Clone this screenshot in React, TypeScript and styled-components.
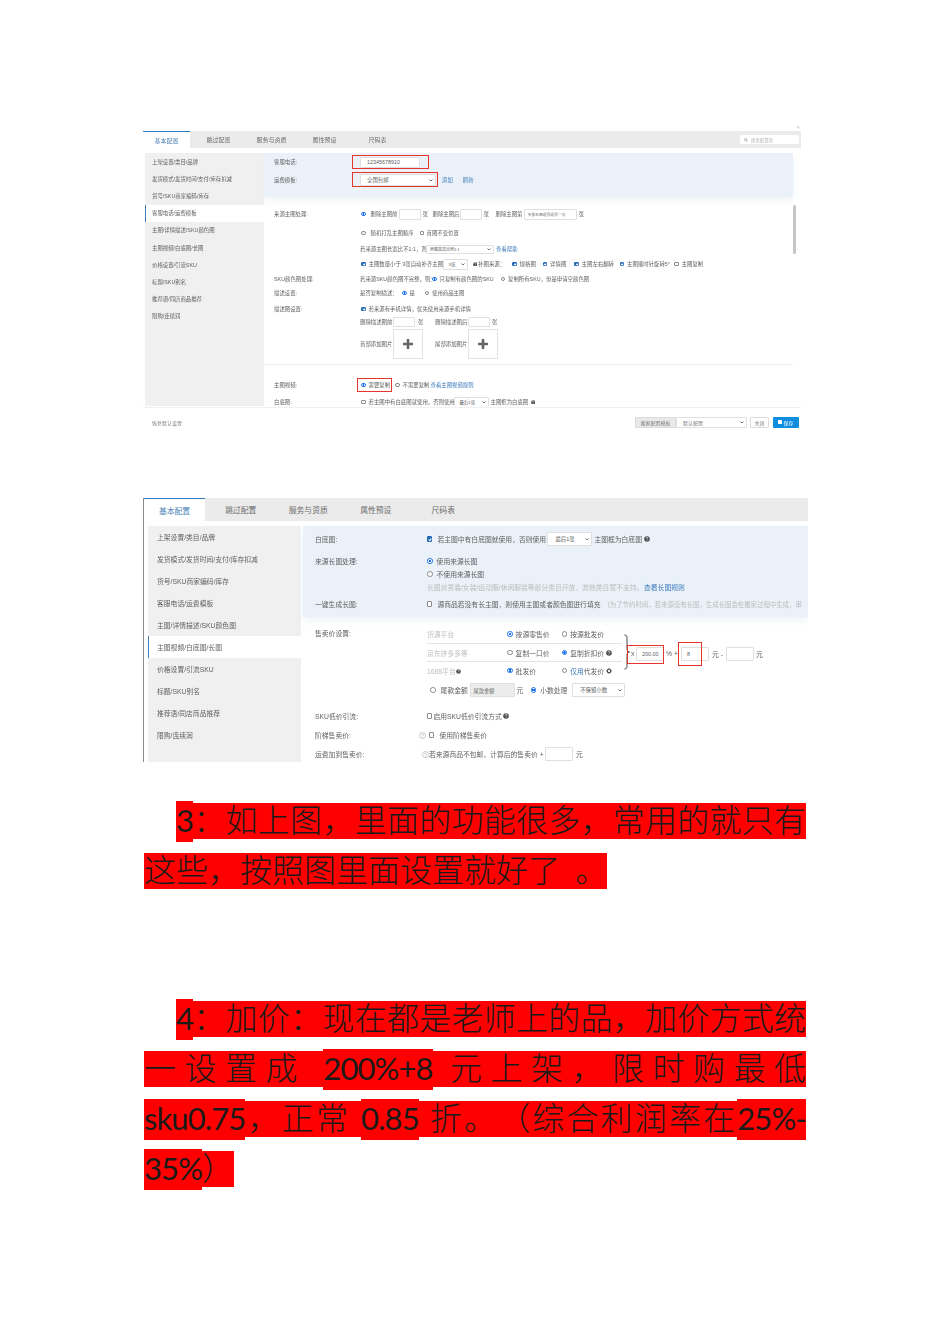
import React from "react";
import styled, { createGlobalStyle } from "styled-components";

const Global = createGlobalStyle`
  html, body { margin: 0; padding: 0; background: #fff; }
  * { box-sizing: border-box; }
`;

const FONT = `"Liberation Sans", "Noto Sans CJK SC", sans-serif`;

const Page = styled.div`
  width: 950px;
  height: 1344px;
  overflow: hidden;
  padding-top: 124px;
  font-family: ${FONT};
`;

const Panel = styled.section<{ $w: number; $h: number; $mt?: number; $fs: number; $rule?: boolean }>`
  position: relative;
  width: ${(p) => p.$w}px;
  height: ${(p) => p.$h}px;
  margin: ${(p) => p.$mt ?? 0}px 0 0 143px;
  font-size: ${(p) => p.$fs}px;
  color: #5f5f5f;
  overflow: hidden;
  filter: blur(0.35px);
  border-left: ${(p) => (p.$rule ? "1px solid #8a8a8a" : "0")};
`;

const CloseRow = styled.div`
  height: 7px;
  line-height: 7px;
  text-align: right;
  font-size: 6px;
  color: #c8c8c8;
  padding-right: 1px;
`;

const TabBar = styled.div<{ $h: number }>`
  display: flex;
  align-items: center;
  justify-content: flex-start;
  height: ${(p) => p.$h}px;
  background: #ebebeb;
`;

const Tab = styled.div<{ $w: number; $active?: boolean; $fs: number }>`
  flex: none;
  align-self: stretch;
  width: ${(p) => p.$w}px;
  display: flex;
  align-items: center;
  justify-content: center;
  font-size: ${(p) => p.$fs}px;
  color: ${(p) => (p.$active ? "#4a7fb5" : "#6c6c6c")};
  background: ${(p) => (p.$active ? "#fff" : "transparent")};
  border-top: ${(p) => (p.$active ? "1.5px solid #2f7dc0" : "0")};
  margin-right: ${(p) => (p.$active ? 2 : 0)}px;
`;

const SearchBox = styled.div`
  margin-left: auto;
  margin-right: 2px;
  width: 59px;
  height: 9px;
  display: flex;
  align-items: center;
  gap: 3px;
  padding-left: 4px;
  border-radius: 2px;
  background: #fff;
  color: #b5b5b5;
  font-size: 4.4px;
`;

const Body = styled.div<{ $h: number; $mt: number; $ml: number }>`
  display: flex;
  height: ${(p) => p.$h}px;
  margin-top: ${(p) => p.$mt}px;
  margin-left: ${(p) => p.$ml}px;
  overflow: hidden;
`;

const Side = styled.nav<{ $w: number }>`
  flex: none;
  width: ${(p) => p.$w}px;
  background: #f0f0f0;
`;

const SideItem = styled.div<{ $h: number; $pl: number; $active?: boolean }>`
  height: ${(p) => p.$h}px;
  display: flex;
  align-items: center;
  padding-left: ${(p) => p.$pl}px;
  white-space: nowrap;
  background: ${(p) => (p.$active ? "#fff" : "transparent")};
  border-left: ${(p) => (p.$active ? "1px solid #3c7fb8" : "0")};
`;

const Main = styled.div<{ $ml?: number }>`
  flex: 1;
  min-width: 0;
  margin-left: ${(p) => p.$ml ?? 0}px;
`;

const Blue = styled.div<{ $w?: number; $pb: number }>`
  width: ${(p) => (p.$w ? `${p.$w}px` : "auto")};
  background: #eaf1f8;
  padding-bottom: ${(p) => p.$pb}px;
  box-shadow: 0 4px 6px rgba(234, 241, 248, 0.7);
`;

const Spacer = styled.div<{ $h: number }>`
  height: ${(p) => p.$h}px;
`;

const Separator = styled.div<{ $w: number }>`
  width: ${(p) => p.$w}px;
  height: 1px;
  background: #eeeeee;
`;

const Field = styled.div<{ $h: number; $pl?: number }>`
  display: flex;
  align-items: center;
  height: ${(p) => p.$h}px;
  padding-left: ${(p) => p.$pl ?? 10}px;
  white-space: nowrap;
`;

const Label = styled.div<{ $w: number }>`
  flex: none;
  width: ${(p) => p.$w}px;
`;

const TopLabel = styled(Label)`
  align-self: flex-start;
  height: 18px;
  line-height: 18px;
`;

const Txt = styled.span<{ $ml?: number; $w?: number; $c?: string }>`
  flex: none;
  display: inline-block;
  margin-left: ${(p) => p.$ml ?? 0}px;
  width: ${(p) => (p.$w ? `${p.$w}px` : "auto")};
  color: ${(p) => p.$c ?? "inherit"};
  white-space: nowrap;
`;

const Note = styled.span`
  flex: none;
  color: #bdbdbd;
  font-size: 6.5px;
  letter-spacing: -0.1px;
  white-space: nowrap;
`;

const Tinted = styled.span`
  color: #3f7cbd;
`;

const Radio = styled.span<{ $on?: boolean; $ml?: number; $s: number }>`
  flex: none;
  width: ${(p) => p.$s}px;
  height: ${(p) => p.$s}px;
  margin-left: ${(p) => p.$ml ?? 0}px;
  border-radius: 50%;
  border: 0.6px solid ${(p) => (p.$on ? "#1a73e8" : "#8a8a8a")};
  background: ${(p) => (p.$on ? "radial-gradient(circle, #1a73e8 48%, #fff 56%)" : "#fff")};
`;

const Check = styled.span<{ $on?: boolean; $ml?: number; $s: number }>`
  flex: none;
  position: relative;
  width: ${(p) => p.$s}px;
  height: ${(p) => p.$s}px;
  margin-left: ${(p) => p.$ml ?? 0}px;
  border-radius: 1px;
  border: 0.6px solid ${(p) => (p.$on ? "#2268b4" : "#8a8a8a")};
  background: ${(p) => (p.$on ? "#2268b4" : "#fff")};
  &::after {
    content: "";
    display: ${(p) => (p.$on ? "block" : "none")};
    position: absolute;
    left: 28%;
    top: 8%;
    width: 34%;
    height: 58%;
    border: solid #fff;
    border-width: 0 0.7px 0.7px 0;
    transform: rotate(40deg);
  }
`;

const Input = styled.span<{ $w: number; $h: number; $ml?: number; $bg?: string; $pl?: number; $fs?: number }>`
  flex: none;
  position: relative;
  display: flex;
  align-items: center;
  width: ${(p) => p.$w}px;
  height: ${(p) => p.$h}px;
  margin-left: ${(p) => p.$ml ?? 0}px;
  padding-left: ${(p) => p.$pl ?? 3}px;
  border: 0.6px solid #dfdfdf;
  border-radius: 1px;
  background: ${(p) => p.$bg ?? "#fff"};
  font-size: ${(p) => (p.$fs ? `${p.$fs}px` : "inherit")};
`;

const Chevron = styled.svg`
  position: absolute;
  right: 2px;
  top: 50%;
  width: 4px;
  height: 3px;
  margin-top: -1.5px;
`;

const RedFrame = styled.div<{ $t: number; $r: number; $b: number; $l: number }>`
  position: absolute;
  top: ${(p) => p.$t}px;
  right: ${(p) => p.$r}px;
  bottom: ${(p) => p.$b}px;
  left: ${(p) => p.$l}px;
  border: 1.2px solid #e5352c;
  pointer-events: none;
`;

const Anchor = styled.span`
  flex: none;
  position: relative;
  display: inline-flex;
  align-items: center;
`;

const Hint = styled.span`
  flex: none;
  display: inline-flex;
`;

const PlusBox = styled.div<{ $ml?: number }>`
  flex: none;
  width: 30px;
  height: 30px;
  margin-left: ${(p) => p.$ml ?? 0}px;
  display: flex;
  align-items: center;
  justify-content: center;
  border: 0.6px solid #e2e2e2;
  color: #666;
`;

const Scrollbar = styled.div`
  position: absolute;
  left: 650px;
  top: 81px;
  width: 3px;
  height: 49px;
  border-radius: 2px;
  background: #c6c6c6;
`;

const Footer = styled.footer`
  height: 24px;
  margin-top: 1px;
  border-top: 1px solid #f0f0f0;
  display: flex;
  align-items: center;
  padding: 5px 2px 0 9px;
  color: #808080;
  font-size: 5px;
`;

const FooterTools = styled.div`
  margin-left: auto;
  display: flex;
  align-items: center;
  height: 11px;
`;

const TemplateTag = styled.div`
  width: 41px;
  height: 11px;
  display: flex;
  align-items: center;
  justify-content: center;
  background: #e9e9e9;
  border: 0.6px solid #dcdcdc;
`;

const CloseBtn = styled.div`
  width: 19px;
  height: 11px;
  margin-left: 3px;
  display: flex;
  align-items: center;
  justify-content: center;
  border: 0.6px solid #dcdcdc;
  border-radius: 1px;
`;

const SaveBtn = styled.div`
  width: 26px;
  height: 11px;
  margin-left: 4px;
  display: flex;
  align-items: center;
  justify-content: center;
  gap: 1px;
  border-radius: 1px;
  background: #0f8ee0;
  color: #fff;
`;

const PriceBlock = styled.div`
  display: flex;
  align-items: center;
  padding-left: 12px;
`;

const PriceTable = styled.div`
  flex: none;
  width: 195px;
`;

const PriceRow = styled.div<{ $line?: boolean }>`
  display: flex;
  align-items: center;
  height: 18px;
  white-space: nowrap;
  border-top: ${(p) => (p.$line ? "1px solid #e4e4e4" : "0")};
`;

const Brace = styled.svg`
  flex: none;
  width: 6px;
  height: 36px;
  margin-left: 2px;
`;

const CalcRow = styled.div`
  display: flex;
  align-items: center;
  padding-top: 3px;
`;

const Article = styled.article<{ $mt: number }>`
  width: 662px;
  margin: ${(p) => p.$mt}px 0 0 144px;
  font-size: 32px;
  font-weight: 300;
  color: #1a1a1a;
  text-spacing-trim: space-all;
`;

const Line = styled.div<{ $indent?: number; $fit?: boolean; $h?: number }>`
  height: ${(p) => p.$h ?? 50}px;
  line-height: 36px;
  padding-left: ${(p) => p.$indent ?? 0}px;
  white-space: ${(p) => (p.$fit ? "normal" : "nowrap")};
  text-align: ${(p) => (p.$fit ? "justify" : "left")};
  text-align-last: ${(p) => (p.$fit ? "justify" : "left")};
  text-justify: inter-character;
`;

const Mark = styled.span`
  background: #ff0000;
  font-family: "Liberation Sans", "Noto Sans CJK SC", sans-serif;
`;

const Num = styled.span`
  background: #ff0000;
  font-family: "Lato", "Liberation Sans", sans-serif;
  font-size: 31px;
  font-weight: 400;
  letter-spacing: -0.9px;
  padding-bottom: 3px;
`;

const Caret = () => (
  <Chevron viewBox="0 0 8 6">
    <path d="M1 1l3 3 3-3" fill="none" stroke="#555" strokeWidth="1.6" />
  </Chevron>
);

const Help = ({ s, ml = 0 }: { s: number; ml?: number }) => (
  <Hint style={{ marginLeft: ml }}>
    <svg width={s} height={s} viewBox="0 0 12 12">
      <circle cx="6" cy="6" r="5.6" fill="#4c4c4c" />
      <path d="M4.2 4.6c0-2.4 3.8-2.4 3.8-.2 0 1.4-2 1.4-2 3" fill="none" stroke="#fff" strokeWidth="1.3" />
      <circle cx="6" cy="9.2" r="0.8" fill="#fff" />
    </svg>
  </Hint>
);

const OutlineHelp = ({ ml = 0 }: { ml?: number }) => (
  <Hint style={{ marginLeft: ml }}>
    <svg width="7" height="7" viewBox="0 0 12 12">
      <circle cx="6" cy="6" r="5.2" fill="none" stroke="#aaa" strokeWidth="1" />
      <path d="M4.4 4.8c0-2 3.4-2 3.4-.1 0 1.2-1.8 1.2-1.8 2.6" fill="none" stroke="#aaa" strokeWidth="1" />
      <circle cx="6" cy="9" r="0.7" fill="#aaa" />
    </svg>
  </Hint>
);

const Gear = ({ ml = 0 }: { ml?: number }) => (
  <Hint style={{ marginLeft: ml }}>
    <svg width="6" height="6" viewBox="0 0 12 12">
      <circle cx="6" cy="6" r="3.4" fill="none" stroke="#4c4c4c" strokeWidth="2.2" />
      <path d="M6 0v2.4M6 9.6V12M0 6h2.4M9.6 6H12M1.8 1.8l1.7 1.7M8.5 8.5l1.7 1.7M1.8 10.2l1.7-1.7M8.5 3.5l1.7-1.7" stroke="#4c4c4c" strokeWidth="1.5" />
    </svg>
  </Hint>
);

const Plus = () => (
  <svg width="10" height="10" viewBox="0 0 10 10">
    <path d="M5 0v10M0 5h10" stroke="#666" strokeWidth="2.6" />
  </svg>
);

const LINK = "#3f7cbd";
const FAINT = "#bdbdbd";

const tabNames = ["基本配置", "跳过配置", "服务与资质", "属性预设", "尺码表"];
const sideNames = [
  "上架设置/类目/品牌",
  "发货模式/发货时间/支付/库存扣减",
  "货号/SKU商家编码/库存",
  "客服电话/运费模板",
  "主图/详情描述/SKU颜色图",
  "主图视频/白底图/长图",
  "价格设置/引流SKU",
  "标题/SKU别名",
  "推荐语/同店商品推荐",
  "限购/连续润",
];

function ConfigTop() {
  const r = 4.5;
  return (
    <Panel $w={658} $h={307} $fs={5.4}>
      <CloseRow>×</CloseRow>
      <TabBar $h={17}>
        {tabNames.map((t, i) => (
          <Tab key={t} $w={i === 0 ? 47 : 53} $active={i === 0} $fs={6}>
            {t}
          </Tab>
        ))}
        <SearchBox>
          <svg width="4" height="4" viewBox="0 0 10 10">
            <circle cx="4" cy="4" r="3" fill="none" stroke="#888" strokeWidth="1.5" />
            <path d="M6.5 6.5L9.5 9.5" stroke="#888" strokeWidth="1.5" />
          </svg>
          <span>搜索配置项</span>
        </SearchBox>
      </TabBar>
      <Body $h={253} $mt={5} $ml={2}>
        <Side $w={119}>
          {sideNames.map((s, i) => (
            <SideItem key={s} $h={17.2} $pl={i === 3 ? 6 : 7} $active={i === 3}>
              {s}
            </SideItem>
          ))}
        </Side>
        <Main>
          <Blue $w={529} $pb={8}>
            <Field $h={18}>
              <Label $w={86}>客服电话:</Label>
              <Input $w={60} $h={11} $pl={6}>
                12345678910
                <RedFrame $t={-3} $r={-10} $b={-2} $l={-9} />
              </Input>
            </Field>
            <Field $h={18}>
              <Label $w={86}>运费模板:</Label>
              <Input $w={76} $h={12} $pl={6}>
                全国包邮
                <Caret />
                <RedFrame $t={-3} $r={-3} $b={-2} $l={-9} />
              </Input>
              <Txt $ml={6} $c={LINK}>添加</Txt>
              <Txt $ml={10} $c={LINK}>刷新</Txt>
            </Field>
          </Blue>
          <Spacer $h={8} />
          <Field $h={18}>
            <Label $w={87}>来源主图处理:</Label>
            <Radio $on $s={r} />
            <Txt $ml={5} $w={28}>删除主图前</Txt>
            <Input $w={22} $h={11} />
            <Txt $ml={2} $w={10}>张</Txt>
            <Txt $w={27}>删除主图后</Txt>
            <Input $w={22} $h={11} />
            <Txt $ml={2} $w={12}>张</Txt>
            <Txt $w={28}>删除主图第</Txt>
            <Input $w={53} $h={11} $fs={3.8}>多张主图逗号逗号","分</Input>
            <Txt $ml={2}>张</Txt>
          </Field>
          <Field $h={20} $pl={97}>
            <Radio $s={r} />
            <Txt $ml={5} $w={44}>随机打乱主图顺序</Txt>
            <Check $s={4} $ml={5} />
            <Txt $ml={3}>首图不变位置</Txt>
          </Field>
          <Field $h={12} $pl={96}>
            <Txt $w={66}>若来源主图长宽比不1:1，则</Txt>
            <Input $w={68} $h={9} $fs={4}>原图宽高比例1:1<Caret /></Input>
            <Txt $ml={2} $c={LINK}>查看帮助</Txt>
          </Field>
          <Field $h={18} $pl={97}>
            <Check $on $s={4.5} />
            <Txt $ml={3} $w={74}>主图数量小于 3张自动补齐主图至</Txt>
            <Input $w={25} $h={11} $fs={4.4} $pl={5}>3张<Caret /></Input>
            <Help s={4.6} ml={5} />
            <Txt $ml={1} $w={32}>补图来源：</Txt>
            <Check $on $s={4.5} $ml={2} />
            <Txt $ml={3} $w={23}>规格图</Txt>
            <Check $on $s={4.5} />
            <Txt $ml={3} $w={24}>详情图</Txt>
            <Check $on $s={4.5} />
            <Txt $ml={3} $w={38}>主图左右翻转</Txt>
            <Check $on $s={4.5} />
            <Txt $ml={3} $w={47}>主图顺时针旋转5°</Txt>
            <Check $s={4.5} />
            <Txt $ml={3}>主图复制</Txt>
          </Field>
          <Field $h={12}>
            <Label $w={86}>SKU颜色图处理:</Label>
            <Txt $w={72}>若来源SKU颜色图不完整，则：</Txt>
            <Radio $on $s={r} />
            <Txt $ml={3} $w={61}>只复制有颜色图的SKU</Txt>
            <Radio $s={r} />
            <Txt $ml={3}>复制所有SKU，但是申请空颜色图</Txt>
          </Field>
          <Field $h={16}>
            <Label $w={86}>描述设置:</Label>
            <Txt $w={42}>是否复制描述：</Txt>
            <Radio $on $s={r} />
            <Txt $ml={3} $w={15}>是</Txt>
            <Radio $s={r} />
            <Txt $ml={3}>使用商品主图</Txt>
          </Field>
          <Field $h={16}>
            <Label $w={87}>描述图设置:</Label>
            <Check $on $s={4.5} />
            <Txt $ml={3}>若来源有手机详情，优先使用来源手机详情</Txt>
          </Field>
          <Field $h={10} $pl={96}>
            <Txt $w={33}>删除描述图前</Txt>
            <Input $w={22} $h={10} />
            <Txt $ml={3} $w={17}>张</Txt>
            <Txt $w={33}>删除描述图后</Txt>
            <Input $w={22} $h={10} />
            <Txt $ml={2}>张</Txt>
          </Field>
          <Spacer $h={2} />
          <Field $h={30} $pl={96}>
            <Txt $w={33}>首部添加图片</Txt>
            <PlusBox><Plus /></PlusBox>
            <Txt $ml={12} $w={33}>尾部添加图片</Txt>
            <PlusBox><Plus /></PlusBox>
          </Field>
          <Spacer $h={5} />
          <Separator $w={529} />
          <Spacer $h={13} />
          <Field $h={14}>
            <Label $w={87}>主图视频:</Label>
            <Anchor>
              <Radio $on $s={r} />
              <Txt $ml={3} $w={26.5}>需要复制</Txt>
              <RedFrame $t={-3} $r={3} $b={-3} $l={-4} />
            </Anchor>
            <Radio $s={r} />
            <Txt $ml={3} $w={28}>不需要复制</Txt>
            <Txt $c={LINK}>查看主图视频规则</Txt>
          </Field>
          <Field $h={20}>
            <Label $w={87}>白底图:</Label>
            <Check $s={4.5} />
            <Txt $ml={3} $w={85}>若主图中有白底图就使用，否则使用</Txt>
            <Input $w={35} $h={10} $fs={4.4} $pl={5}>最后1张<Caret /></Input>
            <Txt $ml={2} $w={40}>主图框为白底图</Txt>
            <Help s={4.6} />
          </Field>
        </Main>
      </Body>
      <Scrollbar />
      <Footer>
        <span>恢复默认设置</span>
        <FooterTools>
          <TemplateTag>搬家配置模板</TemplateTag>
          <Input $w={71} $h={11} $pl={6}>默认配置<Caret /></Input>
          <CloseBtn>关闭</CloseBtn>
          <SaveBtn>
            <svg width="4" height="4" viewBox="0 0 10 10">
              <path d="M0 0h8l2 2v8H0z" fill="#fff" />
            </svg>
            保存
          </SaveBtn>
        </FooterTools>
      </Footer>
    </Panel>
  );
}

function ConfigPrice() {
  const r = 5.6;
  const c = 5.4;
  return (
    <Panel $w={665} $h={264} $mt={67} $fs={6.8} $rule>
      <TabBar $h={23}>
        {tabNames.map((t, i) => (
          <Tab key={t} $w={i === 0 ? 61 : 67.5} $active={i === 0} $fs={7.8}>
            {t}
          </Tab>
        ))}
      </TabBar>
      <Body $h={236} $mt={5} $ml={4}>
        <Side $w={153}>
          {sideNames.map((s, i) => (
            <SideItem key={s} $h={22} $pl={i === 5 ? 8 : 9} $active={i === 5}>
              {s}
            </SideItem>
          ))}
        </Side>
        <Main $ml={2}>
          <Blue $pb={5}>
            <Field $h={26} $pl={12}>
              <Label $w={112}>白底图:</Label>
              <Check $on $s={c} />
              <Txt $ml={5} $w={110}>若主图中有白底图就使用，否则使用</Txt>
              <Input $w={45} $h={14} $fs={5.4} $pl={7}>最后1张<Caret /></Input>
              <Txt $ml={2} $w={50}>主图框为白底图</Txt>
              <Help s={6} />
            </Field>
            <Field $h={18} $pl={12}>
              <Label $w={112}>来源长图处理:</Label>
              <Radio $on $s={r} />
              <Txt $ml={4}>使用来源长图</Txt>
            </Field>
            <Field $h={8} $pl={124}>
              <Radio $s={r} />
              <Txt $ml={4}>不使用来源长图</Txt>
            </Field>
            <Field $h={18} $pl={124}>
              <Txt $w={217} $c={FAINT}>长图对男装/女装/运动服/休闲服装等部分类目开放，其他类目暂不支持。</Txt>
              <Txt $c={LINK}>查看长图规则</Txt>
            </Field>
            <Field $h={16} $pl={12}>
              <Label $w={112}>一键生成长图:</Label>
              <Check $s={c} />
              <Txt $ml={5} $w={166}>源商品若没有长主图，则使用主图或者颜色图进行填充</Txt>
              <Note>（为了节约时间，若来源没有长图，生成长图会在搬家过程中生成，审</Note>
            </Field>
          </Blue>
          <Spacer $h={8} />
          <PriceBlock>
            <TopLabel $w={112}>售卖价设置:</TopLabel>
            <PriceTable>
              <PriceRow>
                <Txt $w={80} $c={FAINT}>货源平台</Txt>
                <Radio $on $s={r} />
                <Txt $ml={3} $w={46}>按源零售价</Txt>
                <Radio $s={r} />
                <Txt $ml={3}>按源批发价</Txt>
              </PriceRow>
              <PriceRow $line>
                <Txt $w={80} $c={FAINT}>京东拼多多等</Txt>
                <Radio $s={r} />
                <Txt $ml={3} $w={46}>复制一口价</Txt>
                <Radio $on $s={r} />
                <Txt $ml={3} $w={36}>复制折扣价</Txt>
                <Help s={6} />
              </PriceRow>
              <PriceRow $line>
                <Txt $w={80} $c={FAINT}>1688平台<Help s={5} /></Txt>
                <Radio $on $s={r} />
                <Txt $ml={3} $w={46}>批发价</Txt>
                <Radio $s={r} />
                <Txt $ml={3} $w={36}><Tinted>仅用</Tinted>代发价</Txt>
                <Gear />
              </PriceRow>
            </PriceTable>
            <Brace viewBox="0 0 6 36">
              <path d="M0.5 1c2.5 0 2.5 1.5 2.5 4v9c0 2.5 0.5 4 2.5 4-2 0-2.5 1.5-2.5 4v9c0 2.5 0 4-2.5 4" fill="none" stroke="#333" strokeWidth="0.9" />
            </Brace>
            <CalcRow>
              <Txt $ml={1} $w={5}>x</Txt>
              <Input $w={28} $h={14} $fs={5.4} $pl={5}>
                200.00
                <RedFrame $t={-2.5} $r={-1} $b={-4.5} $l={-10} />
              </Input>
              <Txt $ml={2} $w={15}>% +</Txt>
              <Input $w={28} $h={14} $fs={5.4} $pl={5}>
                8
                <RedFrame $t={-5.5} $r={6} $b={-6.5} $l={-4} />
              </Input>
              <Txt $ml={3} $w={14}>元 -</Txt>
              <Input $w={28} $h={14} />
              <Txt $ml={2}>元</Txt>
            </CalcRow>
          </PriceBlock>
          <Field $h={22} $pl={127}>
            <Radio $s={r} />
            <Txt $ml={5} $w={29}>尾款金额</Txt>
            <Input $w={45} $h={14} $bg="#ececec" $fs={5.2} $pl={3}>尾款金额</Input>
            <Txt $ml={2} $w={14}>元</Txt>
            <Radio $on $s={r} />
            <Txt $ml={4} $w={32}>小数处理</Txt>
            <Input $w={53} $h={14} $fs={5.4} $pl={7}>不保留小数<Caret /></Input>
          </Field>
          <Spacer $h={4} />
          <Field $h={22} $pl={12}>
            <Label $w={112}>SKU低价引流:</Label>
            <Check $s={c} />
            <Txt $ml={1}>启用SKU低价引流方式</Txt>
            <Help s={6} ml={1} />
          </Field>
          <Field $h={16} $pl={12}>
            <Label $w={104}>阶梯售卖价:</Label>
            <OutlineHelp />
            <Check $s={c} $ml={3} />
            <Txt $ml={5}>使用阶梯售卖价</Txt>
          </Field>
          <Field $h={22} $pl={12}>
            <Label $w={107}>运费加到售卖价:</Label>
            <OutlineHelp />
            <Txt $ml={0} $w={116}>若来源商品不包邮，计算后的售卖价 +</Txt>
            <Input $w={28} $h={14} />
            <Txt $ml={3}>元</Txt>
          </Field>
        </Main>
      </Body>
    </Panel>
  );
}

export default function App() {
  return (
    <Page>
      <Global />
      <ConfigTop />
      <ConfigPrice />
      <Article $mt={40}>
        <Line $indent={32} $fit $h={51}>
          <Mark>
            <Num>3</Num>：如上图，里面的功能很多，常用的就只有
          </Mark>
        </Line>
        <Line>
          <Mark>这些，按照图里面设置就好了&nbsp;&#8201;。</Mark>
        </Line>
      </Article>
      <Article $mt={97}>
        <Line $indent={32} $fit>
          <Mark>
            <Num>4</Num>：加价：现在都是老师上的品，加价方式统
          </Mark>
        </Line>
        <Line $fit>
          <Mark>
            一设置成 <Num>200%+8</Num> 元上架，限时购最低
          </Mark>
        </Line>
        <Line $fit>
          <Mark>
            <Num>sku0.75</Num>，正常 <Num>0.85</Num> 折。（综合利润率在<Num>25%-</Num>
          </Mark>
        </Line>
        <Line>
          <Mark>
            <Num>35%</Num>）
          </Mark>
        </Line>
      </Article>
    </Page>
  );
}
